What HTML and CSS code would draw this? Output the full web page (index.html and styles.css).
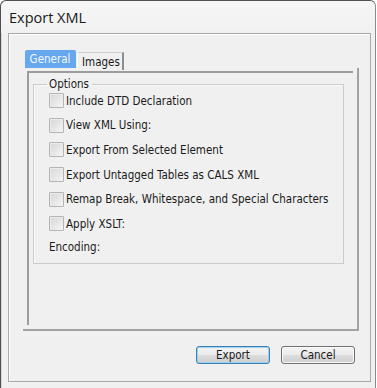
FILE: index.html
```html
<!DOCTYPE html>
<html lang="en">
<head>
    <meta charset="UTF-8">
    <meta name="viewport" content="width=device-width, initial-scale=1.0">
    <title>Export XML</title>
    <link rel="stylesheet" href="styles.css">
</head>
<body>
    <div class="window">
        <div class="titlebar">Export XML</div>
        <div class="frame">
            <div class="tabs">
                <div class="tab active">General</div>
                <div class="tab">Images</div>
            </div>
            <div class="pane-shadow">
                <div class="pane">
                    <fieldset class="options">
                        <legend>Options</legend>
                        <div class="option-list">
                            <div class="option"><span class="checkbox"></span>Include DTD Declaration</div>
                            <div class="option"><span class="checkbox"></span>View XML Using:</div>
                            <div class="option"><span class="checkbox"></span>Export From Selected Element</div>
                            <div class="option"><span class="checkbox"></span>Export Untagged Tables as CALS XML</div>
                            <div class="option"><span class="checkbox"></span>Remap Break, Whitespace, and Special Characters</div>
                            <div class="option"><span class="checkbox"></span>Apply XSLT:</div>
                            <div class="option encoding">Encoding:</div>
                        </div>
                    </fieldset>
                </div>
            </div>
            <div class="buttons">
                <button class="button default">Export</button>
                <button class="button">Cancel</button>
            </div>
        </div>
    </div>
</body>
</html>
```

FILE: styles.css
```css
body {
    margin: 0;
    background: #ffffff;
    font-family: "DejaVu Sans Condensed", "DejaVu Sans", sans-serif;
    font-size: 11.5px;
    color: #1a1a1a;
}

.window {
    width: 374px;
    height: 387px;
    border: 1px solid #4f4f4f;
    border-right-color: #8a8a8a;
    border-bottom: none;
    border-radius: 6px 6px 0 0;
    background: #f0f0f0;
    box-shadow: inset 1px 0 0 #d6d6d6;
}

.titlebar {
    height: 32px;
    padding-left: 8px;
    display: flex;
    align-items: center;
    font-family: "Open Sans", sans-serif;
    font-size: 14.5px;
    color: #1a1a1a;
    background: linear-gradient(to bottom, #f6f6f6, #f1f1f1);
    border-radius: 6px 6px 0 0;
}

.frame {
    margin-left: 7px;
    width: 361px;
    height: 347px;
    border: 1px solid #a8a8a8;
    box-shadow: inset 1px 1px 0 #ffffff;
    display: flex;
    flex-direction: column;
}

.tabs {
    display: flex;
    height: 18px;
    margin-top: 16px;
    margin-left: 16px;
}

.tab {
    height: 18px;
    padding: 0 5px 0 4px;
    display: flex;
    align-items: center;
    box-sizing: border-box;
}

.tab.active {
    width: 51px;
    justify-content: center;
    background: #66a7ee;
    color: #f2f8ff;
    border-radius: 2px 2px 0 0;
}

.tab:not(.active) {
    width: 47px;
    margin-top: 2px;
    margin-left: 1px;
    border-left: 1px solid #ffffff;
    border-top: 1px solid #d0d0d0;
    border-right: 2px solid #8e8e8e;
}

.pane-shadow {
    margin-left: 14px;
    width: 330px;
    padding: 3px 4px 4px 0;
    border-right: 2px solid #a2a2a2;
    border-bottom: 2px solid #a2a2a2;
}

.pane {
    margin-left: 4px;
    height: 247px;
    border-left: 2px solid #9c9c9c;
    border-top: 2px solid #9c9c9c;
    padding: 5px 0 0 4px;
}

.options {
    margin: 0;
    padding: 0;
    width: 309px;
    border: 1px solid #cbcbcb;
    box-shadow: inset 1px 1px 0 #fafafa;
}

.options legend {
    margin-left: 13px;
    padding: 0 3px 0 2px;
    line-height: 13px;
}

.option-list {
    padding: 2px 0 8px 15px;
}

.option {
    display: flex;
    align-items: center;
    height: 15px;
    margin-bottom: 9.7px;
}

.option.encoding {
    margin-top: -1.5px;
    margin-bottom: 0;
}

.checkbox {
    width: 13px;
    height: 13px;
    margin-right: 2px;
    border: 1px solid #b4b4b4;
    border-radius: 1px;
    background: linear-gradient(135deg, #d6d6d6, #f5f5f5);
    box-shadow: inset 1px 1px 0 #ececec;
    flex-shrink: 0;
}

.buttons {
    display: flex;
    justify-content: flex-end;
    gap: 11px;
    margin-top: 15px;
    padding-right: 15px;
}

.button {
    height: 18px;
    width: 74px;
    padding: 0;
    font-family: inherit;
    font-size: 11.5px;
    color: #1a1a1a;
    border: 1px solid #707070;
    border-radius: 3px;
    background: linear-gradient(to bottom, #f3f3f3 0%, #ebebeb 50%, #dddddd 51%, #cfcfcf 100%);
    box-shadow: inset 0 0 0 1px #fafafa;
}

.button.default {
    border-color: #3c7fb1;
    box-shadow: inset 0 0 0 1px #9ad2f0;
}
```
